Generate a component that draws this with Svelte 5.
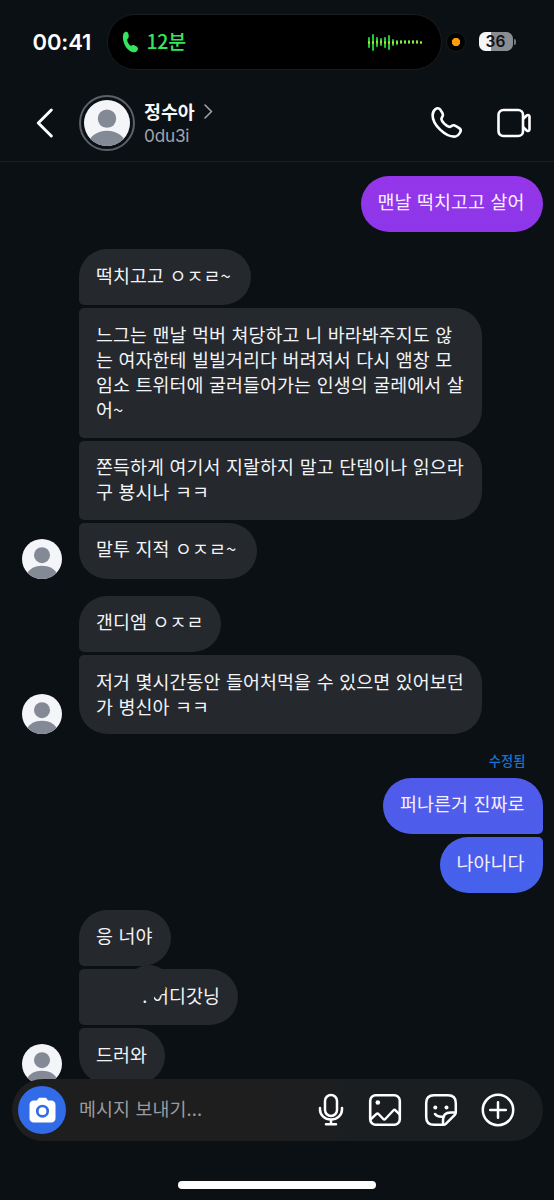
<script>
  const groups = [
    { mine: true, tone: 'purple', items: [{ lines: ['맨날 떡치고고 살어'] }] },
    {
      items: [
        { lines: ['떡치고고 ㅇㅈㄹ~'], w: 172 },
        {
          lines: [
            '느그는 맨날 먹버 쳐당하고 니 바라봐주지도 않',
            '는 여자한테 빌빌거리다 버려져서 다시 앰창 모',
            '임소 트위터에 굴러들어가는 인생의 굴레에서 살',
            '어~'
          ],
          w: 403
        },
        { lines: ['쫀득하게 여기서 지랄하지 말고 단뎀이나 읽으라', '구 뵹시나 ㅋㅋ'], w: 403 },
        { lines: ['말투 지적 ㅇㅈㄹ~'], w: 177.5 }
      ]
    },
    {
      items: [
        { lines: ['갠디엠 ㅇㅈㄹ'], w: 142 },
        { lines: ['저거 몇시간동안 들어처먹을 수 있으면 있어보던', '가 병신아 ㅋㅋ'], w: 403 }
      ]
    },
    {
      mine: true,
      tone: 'blue',
      label: '수정됨',
      items: [{ lines: ['퍼나른거 진짜로'] }, { lines: ['나아니다'] }]
    },
    {
      items: [
        { lines: ['응 너야'], w: 92 },
        { lines: ['어디갓닝'], w: 159, smudged: true },
        { lines: ['드러와'], w: 86 }
      ]
    }
  ];
  const wave = [11, 17, 10, 8, 11, 15, 7, 5, 4, 4, 4, 4, 4, 3];
</script>

{#snippet person()}
  <svg class="person" viewBox="0 0 40 40">
    <defs><clipPath id="face"><circle cx="20" cy="20" r="20" /></clipPath></defs>
    <g clip-path="url(#face)">
      <rect width="40" height="40" fill="#f3f5f9" />
      <circle cx="20" cy="16.2" r="8" fill="#848996" />
      <ellipse cx="20" cy="38" rx="15.6" ry="11.3" fill="#848996" />
    </g>
  </svg>
{/snippet}

<div class="screen">
  <div class="status">
    <span class="time">00:41</span>
    <div class="island">
      <svg class="handset" width="17" height="22" viewBox="0 0 17 22">
        <path d="M3.500.8C5.400.2 6.500 1.700 6.700 4.300c.2 2.300-.3 3.200-1.500 4-.2 2.400 1.500 5.400 3.800 6.600 1.100-1 2-1.300 3.800-.5 2.400 1.100 3.700 2.400 3 4.300-.8 2.100-3 3.100-5.400 2.400C4.600 19.200.8 12.200.9 5.700.95 3.200 1.800 1.400 3.500.800Z" fill="#35e45f" />
      </svg>
      <span class="mins">12분</span>
      <div class="wave">
        {#each wave as h}<i style="height:{h}px"></i>{/each}
      </div>
    </div>
    <span class="rec"></span>
    <span class="battery">36</span>
    <span class="nub"></span>
  </div>

  <header>
    <svg class="back" width="18" height="30" viewBox="0 0 18 30"><path d="M15.300 2 2.300 15l13 13" fill="none" stroke="#fff" stroke-width="2.900" stroke-linecap="round" stroke-linejoin="round" /></svg>
    <div class="ring">{@render person()}</div>
    <div class="who">
      <div class="name">정수아
        <svg width="9" height="15" viewBox="0 0 9 15"><path d="m1 1 6.500 6.500L1 14" fill="none" stroke="#a2a6ad" stroke-width="1.500" stroke-linecap="round" stroke-linejoin="round" /></svg>
      </div>
      <div class="handle">0du3i</div>
    </div>
    <svg class="call" width="34" height="34" viewBox="0 0 34 34"><path d="M5.300 3.300C6.800 2 8.900 1.900 10 3.300c1 1.400 2.500 3.900 2.900 5.100.6 1.800-1.800 3.100-1.500 4.900.4 2.400 4.600 6.700 7.600 7.500 1.800.5 3.100-2.100 5-1.500 1.700.5 3.900 1.900 5.600 3.100 1.300 1 1.400 2.600.5 4.100-1.200 2.200-2.800 4.100-5.800 4.100C14.800 30.600 2.600 18.500 2.600 9.200c0-2.500 1.200-4.600 2.700-5.900Z" fill="none" stroke="#fff" stroke-width="2.600" stroke-linejoin="round" /></svg>
    <svg class="video" width="36" height="30" viewBox="0 0 36 30"><g fill="none" stroke="#fff" stroke-width="2.600" stroke-linejoin="round"><rect x="2.500" y="2" width="24.500" height="26" rx="4.800" /><path d="m27 11 3.700-3.500c1.300-1.100 2.800-.4 2.800 1.200v12.600c0 1.600-1.500 2.300-2.800 1.200L27 19" /></g></svg>
  </header>

  <main>
    {#each groups as g}
      {#if g.label}<div class="label">{g.label}</div>{/if}
      <section class:mine={g.mine} class={g.tone ?? 'gray'}>
        {#if !g.mine}<div class="avatar">{@render person()}</div>{/if}
        <div class="stack">
          {#each g.items as m}
            <div class="bubble" class:smudged={m.smudged} style:width={m.w ? m.w + 'px' : null}>
              {#if m.smudged}<span class="dot">.</span>{/if}
              {#each m.lines as l}<div class="line">{l}</div>{/each}
              {#if m.smudged}
                <svg class="smudge" width="40" height="44" viewBox="0 0 40 44"><path d="M7 5Q20-3 33 5V22L37 24.500Q33 31 29 33.500Q27 35 25 32.500V35H16V28H7Z" fill="#25282d" /></svg>
              {/if}
            </div>
          {/each}
        </div>
      </section>
    {/each}
  </main>

  <footer>
    <div class="camera">
      <svg width="27" height="26" viewBox="0 0 27 26"><path d="M5 3.600h2.300C8.500 3.600 8.800.7 11 .7h5c2.200 0 2.500 2.900 3.700 2.900H22c2.900 0 4.500 1.600 4.500 4.400v13c0 2.900-1.600 4.500-4.500 4.500H5c-2.900 0-4.500-1.600-4.500-4.500V8c0-2.800 1.600-4.400 4.500-4.400Z" fill="#fff" /><circle cx="13.500" cy="14.200" r="5.200" fill="none" stroke="#326be8" stroke-width="2.700" /></svg>
    </div>
    <span class="hint">메시지 보내기...</span>
    <svg class="mic" width="26" height="34" viewBox="0 0 26 34"><g fill="none" stroke="#fff" stroke-width="2.500" stroke-linecap="round"><rect x="7" y="2" width="12" height="21" rx="6" /><path d="M2 15v1.500C2 22 6.800 26.500 13 26.500S24 22 24 16.500V15M13 26.500V31M8 31.300h10" /></g></svg>
    <svg class="pic" width="34" height="34" viewBox="0 0 34 34"><rect x="2.200" y="2.200" width="29.600" height="29.600" rx="5.500" fill="none" stroke="#fff" stroke-width="2.600" /><circle cx="9.800" cy="9.500" r="2.300" fill="#fff" /><path d="m2.500 26.500 6-5.600q1-.8 2 .1l4.800 5q1 .9 2 0l8.200-8.700q1-1 2 0l4.300 4.400" fill="none" stroke="#fff" stroke-width="2.400" stroke-linejoin="round" /></svg>
    <svg class="sticker" width="34" height="34" viewBox="0 0 34 34"><g fill="none" stroke="#fff" stroke-width="2.500" stroke-linecap="round" stroke-linejoin="round"><path d="M19 31.800H10C4.800 31.800 2.200 29.200 2.200 24V10c0-5.200 2.600-7.800 7.800-7.800h14c5.200 0 7.800 2.600 7.800 7.800v9c0 1.200-.2 2-1 2.800l-9 9c-.8.800-1.600 1-2.800 1Z" /><path d="M19 31.600v-4.500c0-5 2.500-7.600 7.500-7.600h5M11 21c2.500 3 5.500 3.200 9 2.600" /></g><circle cx="11.300" cy="14.600" r="2" fill="#fff" /><circle cx="22.500" cy="14.600" r="2" fill="#fff" /></svg>
    <svg class="plus" width="34" height="34" viewBox="0 0 34 34"><g fill="none" stroke="#fff" stroke-width="2.500" stroke-linecap="round"><circle cx="17" cy="17" r="15.200" /><path d="M17 9.200v15.600M9.200 17h15.600" /></g></svg>
  </footer>
  <div class="home"></div>
</div>

<style>
  :global(body) { background: #0b1014; }
  .screen {
    position: relative;
    width: 554px;
    height: 1200px;
    overflow: hidden;
    background: #0b1014;
    color: #f2f4f7;
    font-family: 'Noto Sans CJK KR', 'Noto Sans', sans-serif;
  }
  svg { display: block; flex: none; }
  .status { display: flex; align-items: center; box-sizing: border-box; height: 84px; padding-left: 32.500px; }
  .time { flex: none; width: 74.500px; font: 600 22px/1 Inter, sans-serif; letter-spacing: -.1px; color: #fff; white-space: nowrap; }
  .island {
    display: flex; align-items: center; box-sizing: border-box; flex: none;
    width: 334.500px; height: 56px; padding: 0 19px 0 14px;
    background: #000; border: 1.500px solid #191c20; border-radius: 28px;
  }
  .mins { margin: -2px 0 0 7.500px; color: #35e45f; font-size: 19.500px; font-weight: 500; line-height: 28px; letter-spacing: -.3px; }
  .wave { display: flex; align-items: center; gap: 2px; margin-left: auto; }
  .wave i { width: 2px; border-radius: 1px; background: linear-gradient(#22c936, #22c936 calc(50% - 2px), #b9ee35 50%, #22c936 calc(50% + 2px)); }
  .rec { box-sizing: border-box; width: 20px; height: 20px; margin-left: 4px; border: 1.500px solid #191c20; border-radius: 50%; background: radial-gradient(circle, #ff9a0a 3.800px, #000 4.500px); }
  .battery {
    width: 34px; height: 19px; margin: -1px 0 0 13px; border-radius: 6.500px;
    background: linear-gradient(90deg, #f5f6f7 36%, #898c90 36%);
    color: #101316; text-align: center; font: 600 15.500px/19.500px Inter, sans-serif;
  }
  .nub { width: 2px; height: 6px; margin: -1px 0 0 1px; border-radius: 0 2px 2px 0; background: #777a7f; }

  header { display: flex; align-items: center; box-sizing: border-box; height: 78px; padding: 0 22px 0 36px; border-bottom: 1px solid #1b1f24; }
  .ring { box-sizing: border-box; flex: none; width: 56px; height: 56px; margin-left: 25px; padding: 3px; border: 2px solid #5c6069; border-radius: 50%; }
  .person { width: 100%; height: 100%; }
  .who { width: 140px; margin: 1px 0 0 9px; }
  .name { display: flex; align-items: center; gap: 9.500px; height: 25px; font-size: 18.400px; font-weight: 700; line-height: 25px; color: #f7f8fa; }
  .name svg { margin-top: -1px; }
  .handle { height: 23px; color: #a0a5ae; font: 400 17.200px/23px Inter, sans-serif; letter-spacing: -.2px; }
  .call { margin-left: auto; margin-top: 1px; }
  .video { margin-left: 32px; margin-top: 1px; }

  main { padding: 14px 11.500px 0 79px; }
  section { position: relative; margin-bottom: 17px; }
  .stack { display: flex; flex-direction: column; align-items: flex-start; gap: 3px; }
  .mine .stack { align-items: flex-end; }
  .avatar { position: absolute; left: -57px; bottom: 0; width: 40px; height: 40px; }
  .bubble {
    position: relative; box-sizing: border-box; min-height: 56.150px; padding: 13.400px 18px 15.300px 17px;
    border-radius: 5px 28px 28px 5px; background: #25282d;
    font-size: 18.400px; letter-spacing: .09px; word-spacing: 1.300px; line-height: 25.200px; white-space: nowrap;
  }
  .bubble:first-child { border-top-left-radius: 28px; }
  .bubble:last-child { border-bottom-left-radius: 28px; }
  .mine .bubble { padding-left: 16.500px; border-radius: 28px 5px 5px 28px; color: #f8eeff; }
  .mine .bubble:first-child { border-top-right-radius: 28px; }
  .mine .bubble:last-child { border-bottom-right-radius: 28px; }
  .purple .bubble { background: linear-gradient(#9535e9, #8d37e9); }
  .blue .bubble { background: linear-gradient(#515aea, #4c5eeb); }
  .blue .bubble:last-child { background: linear-gradient(#4b5eeb, #4562ed); }
  .label { height: 26.500px; padding-right: 17px; text-align: right; color: #1a73cf; font-size: 13.300px; font-weight: 500; line-height: 19px; }
  .smudged { display: flex; justify-content: flex-end; }
  .dot { margin-right: 4.500px; }
  .smudge { position: absolute; left: 50px; top: -5px; }

  footer {
    position: absolute; left: 11.500px; top: 1079px;
    display: flex; align-items: center; box-sizing: border-box;
    width: 531px; height: 61.500px; padding: 0 28px 0 6.500px;
    border-radius: 31px; background: linear-gradient(90deg, #1e1e1f 50%, #1b1e21 65%);
  }
  .camera { display: grid; place-items: center; flex: none; width: 48px; height: 48px; border-radius: 50%; background: #326be8; }
  .hint { margin: -3px 0 0 13px; color: #9a9b9f; font-size: 18.400px; line-height: 26px; letter-spacing: .09px; word-spacing: 1.300px; }
  .mic { margin-left: auto; }
  .pic { margin-left: 24px; }
  .sticker { margin-left: 22.500px; }
  .plus { margin-left: 22.500px; }
  .home { position: absolute; left: 178px; top: 1181px; width: 198px; height: 8px; border-radius: 4px; background: #fff; }
</style>
